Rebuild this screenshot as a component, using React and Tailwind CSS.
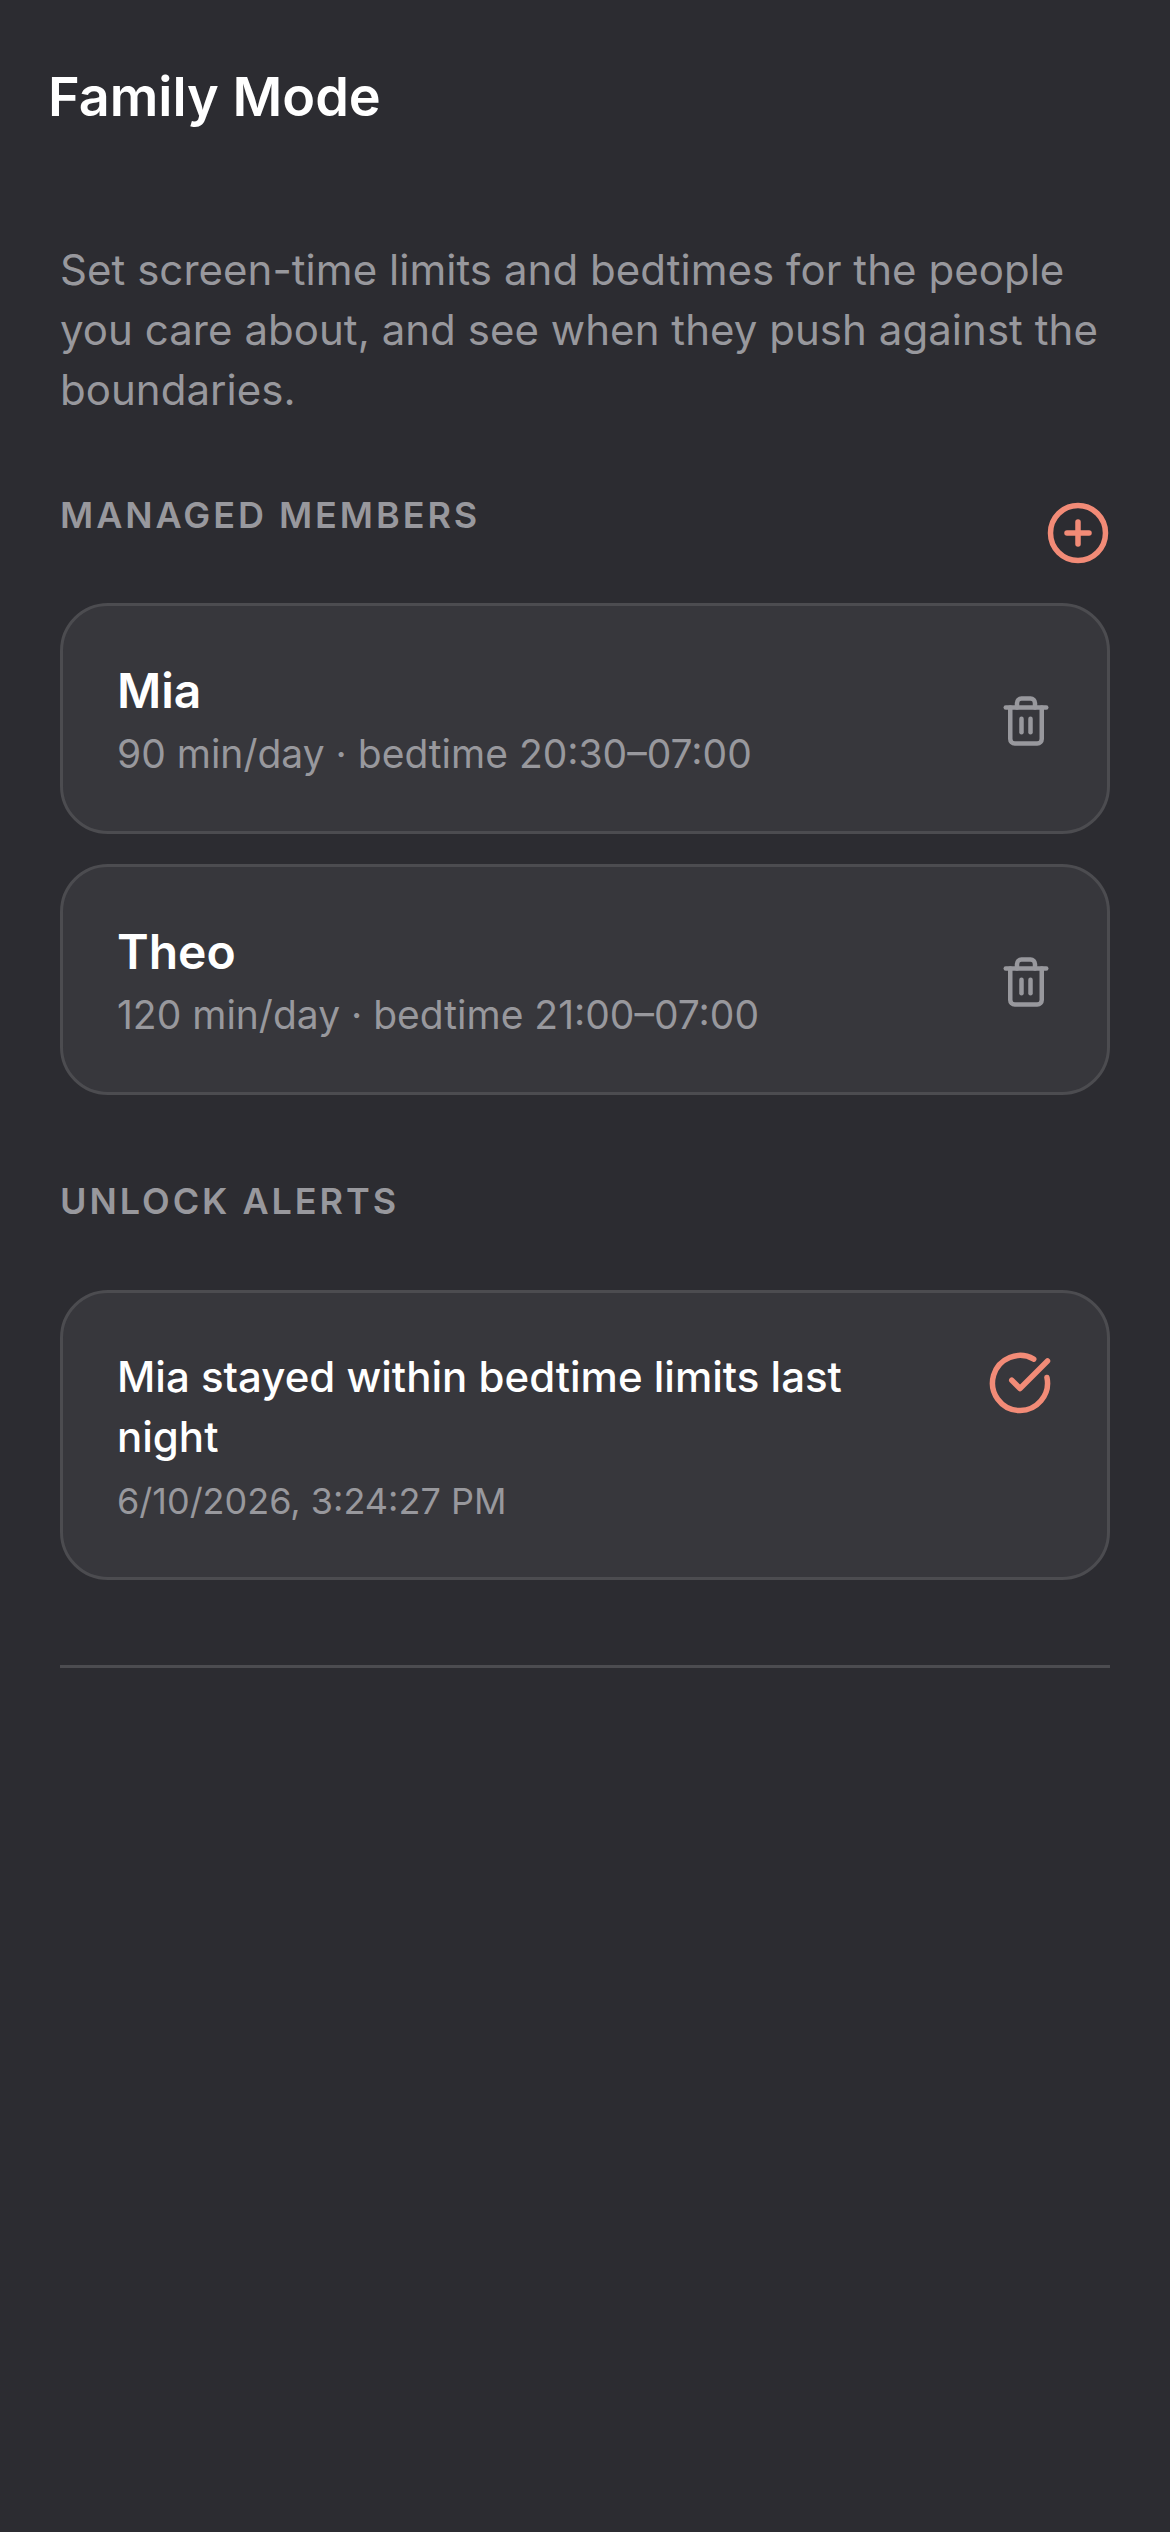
import React from "react";
import { Trash2, CirclePlus, CircleCheckBig } from "lucide-react";

const font = { fontFamily: "Inter, sans-serif" };

function Member({ name, meta }) {
  return (
    <div className="flex h-[231px] items-center justify-between rounded-[48px] border-[3px] border-[#4c4c50] bg-[#37373c] pl-[54px] pr-[54px]">
      <div className="flex flex-col pt-[4px]">
        <span className="text-[48px] leading-[60px] font-semibold text-white">{name}</span>
        <span className="mt-[6px] text-[39px] leading-[54px] text-[#98989d]">{meta}</span>
      </div>
      <Trash2 className="mt-[4px] shrink-0 text-[#98989d]" size={54} strokeWidth={2} />
    </div>
  );
}

export default function App() {
  return (
    <div className="min-h-[2532px] bg-[#2c2c31] antialiased" style={font}>
      <header className="px-[48px] pt-[61px]">
        <h1 className="text-[54px] leading-[72px] font-semibold text-white">Family Mode</h1>
      </header>
      <main className="px-[60px] pt-[107px]">
        <p className="text-[42px] leading-[60px] tracking-[0.04px] text-[#98989d]">
          Set screen-time limits and bedtimes for the people you care about, and see when they push against the boundaries.
        </p>
        <div className="mt-[71px] flex items-start justify-between">
          <h2 className="text-[36px] leading-[48px] font-semibold tracking-[2.95px] text-[#98989d]">MANAGED MEMBERS</h2>
          <CirclePlus className="mt-[9px] -mr-[1px] text-[#f28b77]" size={66} strokeWidth={2} />
        </div>
        <div className="mt-[37px] flex flex-col gap-[30px]">
          <Member name="Mia" meta="90 min/day · bedtime 20:30–07:00" />
          <Member name="Theo" meta="120 min/day · bedtime 21:00–07:00" />
        </div>
        <h2 className="mt-[82px] text-[36px] leading-[48px] font-semibold tracking-[2.95px] text-[#98989d]">UNLOCK ALERTS</h2>
        <div className="mt-[65px] flex items-start justify-between rounded-[48px] border-[3px] border-[#4c4c50] bg-[#37373c] pt-[54px] pb-[52px] pl-[54px] pr-[54px]">
          <div className="flex w-[780px] flex-col">
            <span className="text-[42px] leading-[60px] font-medium text-white">Mia stayed within bedtime limits last night</span>
            <span className="mt-[10px] text-[36px] leading-[48px] text-[#98989d]">6/10/2026, 3:24:27 PM</span>
          </div>
          <CircleCheckBig className="mt-[3px] shrink-0 text-[#f28b77]" size={66} strokeWidth={2} />
        </div>
        <div className="mt-[85px] h-[3px] bg-[#4c4c50]" />
      </main>
    </div>
  );
}
